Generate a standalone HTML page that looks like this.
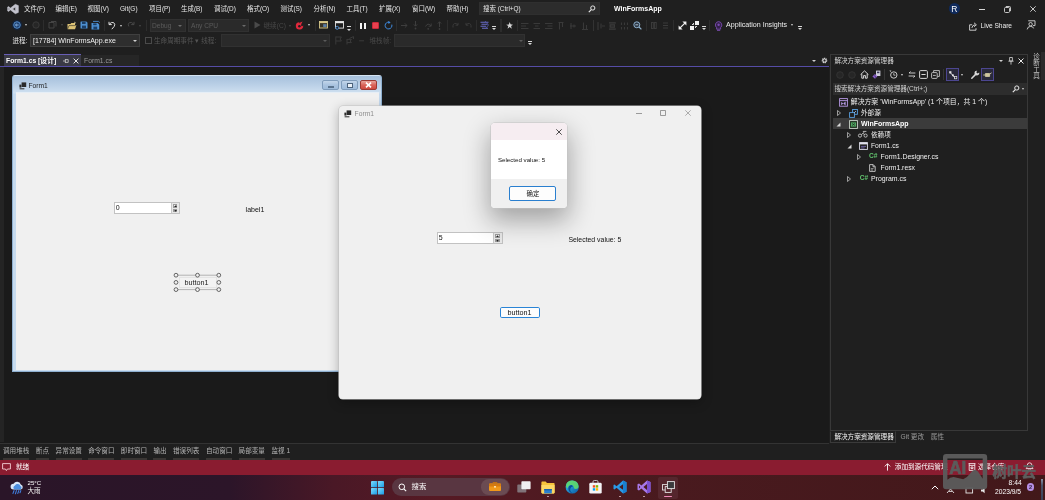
<!DOCTYPE html>
<html lang="zh-CN">
<head>
<meta charset="utf-8">
<title>WinFormsApp - Visual Studio</title>
<style>
*{box-sizing:border-box;margin:0;padding:0}
html,body{width:1045px;height:500px;overflow:hidden;background:#1f1f1f}
body{position:relative;font-family:"Liberation Sans","Noto Sans CJK SC",sans-serif;font-size:6.6px;color:#e6e6e6;line-height:1}
.a{position:absolute;white-space:nowrap}
.t{position:absolute;white-space:nowrap;line-height:10px;height:10px}
.dim{color:#6a6a6a}
.combo{position:absolute;background:#2a2a2a;border:1px solid #313131}
.arrow{position:absolute;width:0;height:0;border-left:2px solid transparent;border-right:2px solid transparent;border-top:2.5px solid #d0d0d0}
.arrow.d{border-top-color:#666}
.sep{position:absolute;width:1px;background:#2d2d2d}
svg{position:absolute;overflow:visible}
</style>
</head>
<body>
<div id="root" style="position:absolute;left:0;top:0;width:1045px;height:500px;will-change:transform">
<!-- ===== MENU BAR ===== -->
<div id="menubar" style="font-size:6.45px">
<svg style="left:7px;top:4px" width="12" height="10" viewBox="0 0 12 10"><path d="M8.3 0.3 L11.4 1.6 V8.4 L8.3 9.7 L3.4 5.9 L1.6 7.4 L0.6 6.9 V3.1 L1.6 2.6 L3.4 4.1 Z M8.3 3.2 L5.6 5 L8.3 6.8 Z M1.6 4.1 V5.9 L2.6 5 Z" fill="#c2c2cc" stroke="#c2c2cc" stroke-width="0.5" stroke-linejoin="round" fill-rule="evenodd"/></svg>
<div class="t" style="left:24px;top:4px">文件(F)</div>
<div class="t" style="left:55.5px;top:4px">编辑(E)</div>
<div class="t" style="left:87.5px;top:4px">视图(V)</div>
<div class="t" style="left:120px;top:4px">Git(G)</div>
<div class="t" style="left:149px;top:4px">项目(P)</div>
<div class="t" style="left:181px;top:4px">生成(B)</div>
<div class="t" style="left:214px;top:4px">调试(D)</div>
<div class="t" style="left:247px;top:4px">格式(O)</div>
<div class="t" style="left:280.5px;top:4px">测试(S)</div>
<div class="t" style="left:313.5px;top:4px">分析(N)</div>
<div class="t" style="left:346.5px;top:4px">工具(T)</div>
<div class="t" style="left:379px;top:4px">扩展(X)</div>
<div class="t" style="left:412px;top:4px">窗口(W)</div>
<div class="t" style="left:446.5px;top:4px">帮助(H)</div>
<div class="a" style="left:479px;top:2px;width:121px;height:13px;background:#2c2c2c;border:1px solid #2f2f2f"></div>
<div class="t" style="left:483px;top:4px">搜索 (Ctrl+Q)</div>
<svg style="left:588px;top:5px" width="8" height="8" viewBox="0 0 8 8"><circle cx="4.8" cy="3" r="2.1" fill="none" stroke="#e6e6e6" stroke-width="1"/><path d="M3.3 4.6 L0.8 7.2" stroke="#e6e6e6" stroke-width="1.2"/></svg>
<div class="t" style="left:614px;top:4px;font-weight:bold;color:#fff;font-size:7px">WinFormsApp</div>
<div class="a" style="left:949px;top:3px;width:11px;height:11px;border-radius:50%;background:#0f2a5c"></div>
<div class="t" style="left:951.3px;top:3.6px;font-size:8.5px;color:#fff">R</div>
<div class="a" style="left:979px;top:8.5px;width:6px;height:1px;background:#d8d8d8"></div>
<svg style="left:1004px;top:5.5px" width="7" height="7" viewBox="0 0 7 7"><rect x="0.5" y="1.5" width="5" height="5" rx="1" fill="none" stroke="#d8d8d8" stroke-width="0.9"/><path d="M1.8 0.5 H5.5 Q6.5 0.5 6.5 1.5 V5.2" fill="none" stroke="#d8d8d8" stroke-width="0.9"/></svg>
<svg style="left:1030px;top:6px" width="6" height="6" viewBox="0 0 6 6"><path d="M0.3 0.3 L5.7 5.7 M5.7 0.3 L0.3 5.7" stroke="#d8d8d8" stroke-width="0.9"/></svg>
</div>

<!-- ===== TOOLBAR ROW 1 ===== -->
<div id="toolbar1">
<svg style="left:13px;top:20.7px" width="8" height="8" viewBox="0 0 8 8"><circle cx="4" cy="4" r="5.2" fill="#14233a"/><circle cx="4" cy="4" r="3.3" fill="#1f4272" stroke="#5a94d4" stroke-width="0.9"/><path d="M5.6 4 H2.6 M3.8 2.8 L2.5 4 L3.8 5.2" fill="none" stroke="#9cc8f4" stroke-width="0.8"/></svg>
<div class="arrow" style="left:25px;top:24px;border-left-width:1.5px;border-right-width:1.5px;border-top-width:2px"></div>
<svg style="left:32px;top:21px" width="8" height="8" viewBox="0 0 8 8"><circle cx="4" cy="4" r="3.2" fill="#262626" stroke="#3c3c3c" stroke-width="0.9"/></svg>
<div class="sep" style="left:43px;top:20px;height:11px"></div>
<svg style="left:48px;top:21px" width="9" height="8" viewBox="0 0 9 8"><path d="M1 1.5 H6 V7 H1 Z M3 0.5 H8 V5.5" fill="none" stroke="#444" stroke-width="1"/></svg>
<div class="arrow d" style="left:60.5px;top:24px;border-left-width:1.5px;border-right-width:1.5px;border-top-width:2px;border-top-color:#4a4a4a"></div>
<svg style="left:67px;top:20.5px" width="10" height="9" viewBox="0 0 10 9"><path d="M0.5 3 H3.5 L4.3 2 H8 V4 H9.5 L8 8.3 H0.5 Z" fill="#dcc274"/><path d="M0.5 8.3 L2 4.6 H9.5" fill="none" stroke="#2a2a2a" stroke-width="0.6"/><path d="M7.5 0.3 L8 1.2 L9 1.4 L8.2 2 L8.4 3 L7.5 2.5" fill="#f0e0a0"/></svg>
<svg style="left:79.5px;top:21px" width="8" height="8" viewBox="0 0 8 8"><path d="M0.5 1 Q0.5 0.5 1 0.5 H6.3 L7.5 1.7 V7 Q7.5 7.5 7 7.5 H1 Q0.5 7.5 0.5 7 Z" fill="#4d8fd0"/><rect x="2" y="0.8" width="3.6" height="2.2" fill="#1c3f66"/><rect x="2" y="4.6" width="4" height="2.9" fill="#1c3f66"/></svg>
<svg style="left:91px;top:20.5px" width="9" height="9" viewBox="0 0 9 9"><path d="M0.5 2 H6.6 L8.2 3.4 V8.5 H0.5 Z" fill="#4d8fd0"/><path d="M2 0.4 H7.5 L8.8 1.6" fill="none" stroke="#4d8fd0" stroke-width="0.9"/><rect x="2.2" y="2.4" width="3.4" height="1.8" fill="#1c3f66"/><rect x="2.4" y="5.6" width="3.8" height="2.9" fill="#1c3f66"/></svg>
<div class="sep" style="left:103.5px;top:20px;height:11px"></div>
<svg style="left:107.5px;top:21px" width="8" height="9" viewBox="0 0 8 9"><path d="M1 0.8 V3.6 H3.8" fill="none" stroke="#e0e0e0" stroke-width="1"/><path d="M1.2 3.4 Q3.2 0.6 5.6 1.6 Q7.6 3 6.2 5.4 L3.8 8.2" fill="none" stroke="#e0e0e0" stroke-width="1"/></svg>
<div class="arrow" style="left:119.5px;top:24.5px;border-left-width:1.5px;border-right-width:1.5px;border-top-width:2px"></div>
<svg style="left:127px;top:21px" width="8" height="9" viewBox="0 0 8 9"><path d="M7 0.8 V3.6 H4.2" fill="none" stroke="#484848" stroke-width="1"/><path d="M6.8 3.4 Q4.8 0.6 2.4 1.6 Q0.4 3 1.8 5.4" fill="none" stroke="#484848" stroke-width="1"/></svg>
<div class="arrow d" style="left:138.5px;top:24.5px;border-left-width:1.5px;border-right-width:1.5px;border-top-width:2px;border-top-color:#4a4a4a"></div>
<div class="sep" style="left:145.5px;top:20px;height:11px"></div>
<div class="combo" style="left:149.5px;top:19px;width:36px;height:13px"></div>
<div class="t dim" style="left:152px;top:20.5px;color:#5a5a5a">Debug</div>
<div class="arrow d" style="left:178px;top:24.5px;border-top-color:#6a6a6a"></div>
<div class="combo" style="left:188px;top:19px;width:60.5px;height:13px"></div>
<div class="t dim" style="left:191px;top:20.5px;color:#5a5a5a">Any CPU</div>
<div class="arrow d" style="left:241.5px;top:24.5px;border-top-color:#6a6a6a"></div>
</div>
<!-- ===== TOOLBAR ROW 2 (debug location) ===== -->
<div id="toolbar2">
<div class="t" style="left:12.5px;top:35.9px">进程:</div>
<div class="combo" style="left:29.5px;top:33.5px;width:110px;height:13px;background:#2e2e2e;border-color:#3f3f3f"></div>
<div class="t" style="left:33px;top:35.7px;color:#f0f0f0;font-size:7px">[17784] WinFormsApp.exe</div>
<div class="arrow" style="left:132.5px;top:39.5px"></div>
<div class="a" style="left:144.5px;top:36.5px;width:7px;height:7px;border:1px solid #4a4a4a"></div>
<div class="t dim" style="left:154px;top:35.5px;color:#555">生命周期事件 ▾ 线程:</div>
<div class="combo" style="left:220.5px;top:33.5px;width:109px;height:13px"></div>
<div class="arrow d" style="left:323px;top:39.5px;border-top-color:#5a5a5a"></div>
</div>

<!-- ===== TOOLBAR ROW 1 continued ===== -->
<div id="toolbar1b">
<svg style="left:253.5px;top:21px" width="7" height="8" viewBox="0 0 7 8"><path d="M0.5 0.5 L6.5 4 L0.5 7.5 Z" fill="#4a4a4a"/></svg>
<div class="t" style="left:263.5px;top:20.5px;color:#484848">继续(C)</div>
<div class="arrow d" style="left:288.5px;top:24.5px;border-left-width:1.5px;border-right-width:1.5px;border-top-width:2px;border-top-color:#4a4a4a"></div>
<svg style="left:295px;top:20.5px" width="9" height="9" viewBox="0 0 9 9"><path d="M4.4 1.2 A3.7 3.7 0 1 0 8.2 4.6 Q7.4 5.4 6.2 5 Q5.6 3.2 7.6 0.4 Q5.2 0.8 4.4 2.6 Z" fill="#e0283c"/><circle cx="4.4" cy="5.2" r="1.3" fill="#1f1f1f"/></svg>
<div class="arrow" style="left:307.5px;top:24.3px;border-left-width:1.7px;border-right-width:1.7px;border-top-width:2px"></div>
<div class="sep" style="left:314.5px;top:20px;height:11px"></div>
<svg style="left:318.5px;top:21px" width="9" height="8" viewBox="0 0 9 8"><rect x="0.5" y="0.5" width="8" height="6.5" fill="#3a3526" stroke="#d9c98a" stroke-width="0.9"/><rect x="0.5" y="0.5" width="8" height="1.6" fill="#d9c98a"/><rect x="4.2" y="3.2" width="3.4" height="2.8" fill="#5b7fa8"/></svg>
<svg style="left:335px;top:20.5px" width="9" height="9" viewBox="0 0 9 9"><rect x="0.5" y="0.5" width="8" height="6.6" fill="#1f1f1f" stroke="#e4e4e4" stroke-width="0.9"/><rect x="0.5" y="0.5" width="8" height="1.7" fill="#e4e4e4"/><circle cx="2.2" cy="6.8" r="1.5" fill="#1f1f1f" stroke="#4d8fd6" stroke-width="0.9"/></svg>
<div class="a" style="left:347px;top:26.400000000000002px;width:4px;height:1px;background:#d8d8d8"></div><div class="arrow" style="left:347px;top:28.6px;border-top-color:#d8d8d8;border-left-width:2px;border-right-width:2px;border-top-width:2px"></div>
<div class="sep" style="left:355px;top:20px;height:11px"></div>
<div class="a" style="left:360.3px;top:22.6px;width:2px;height:6px;background:#f4f4f4"></div>
<div class="a" style="left:364.2px;top:22.6px;width:2px;height:6px;background:#f4f4f4"></div>
<div class="a" style="left:372px;top:22px;width:7px;height:7px;border-radius:1px;background:#e8414f;border:1px solid #c8283a"></div>
<svg style="left:383.5px;top:20.5px" width="9" height="9" viewBox="0 0 9 9"><path d="M5.2 1.2 A3.4 3.4 0 1 0 7.8 3.6" fill="none" stroke="#3f8be0" stroke-width="1"/><path d="M4.2 0 L6.6 1.2 L4.6 2.9 Z" fill="#3f8be0"/></svg>
<div class="sep" style="left:395.5px;top:20px;height:11px"></div>
<svg style="left:401px;top:22px" width="7" height="7" viewBox="0 0 7 7"><path d="M0 3.5 H6 M3.8 1.3 L6 3.5 L3.8 5.7" fill="none" stroke="#3e3e3e" stroke-width="1"/></svg>
<svg style="left:413px;top:21px" width="5" height="9" viewBox="0 0 5 9"><path d="M2.5 0 V5 M0.8 3.4 L2.5 5.2 L4.2 3.4" fill="none" stroke="#3e3e3e" stroke-width="1"/><circle cx="2.5" cy="7.5" r="0.9" fill="#3e3e3e"/></svg>
<svg style="left:424.5px;top:21.5px" width="7" height="8" viewBox="0 0 7 8"><path d="M0.5 4.5 Q3 0 6 4 M6.2 1.5 V4.2 H3.6" fill="none" stroke="#3e3e3e" stroke-width="1"/><circle cx="3.2" cy="6.8" r="0.9" fill="#3e3e3e"/></svg>
<svg style="left:437px;top:20.5px" width="5" height="9" viewBox="0 0 5 9"><path d="M2.5 6 V0.8 M0.8 2.6 L2.5 0.8 L4.2 2.6" fill="none" stroke="#3e3e3e" stroke-width="1"/><circle cx="2.5" cy="8" r="0.9" fill="#3e3e3e"/></svg>
<div class="sep" style="left:447px;top:20px;height:11px"></div>
<svg style="left:452px;top:22px" width="7" height="7" viewBox="0 0 7 7"><path d="M1 5.5 Q0.5 1 4 1.5 L6 3 M6 0.8 V3.2 H3.6" fill="none" stroke="#3a3a3a" stroke-width="1"/></svg>
<svg style="left:464.5px;top:22px" width="7" height="7" viewBox="0 0 7 7"><path d="M6 5.5 Q6.5 1 3 1.5 L1 3 M1 0.8 V3.2 H3.4" fill="none" stroke="#3a3a3a" stroke-width="1"/></svg>
<div class="sep" style="left:475.5px;top:20px;height:11px"></div>
<svg style="left:480px;top:21px" width="9" height="8" viewBox="0 0 9 8"><path d="M0.5 1.2 H8.5 M1.5 3.2 H7.5 M0.5 5.2 H6 M2 7.2 H8" stroke="#6a6cc8" stroke-width="1.1"/><path d="M5 0 L8.5 4 L5.5 7.5" fill="none" stroke="#5558b0" stroke-width="0.8"/></svg>
<div class="a" style="left:491.7px;top:25.8px;width:4px;height:1px;background:#d8d8d8"></div><div class="arrow" style="left:491.7px;top:28px;border-top-color:#d8d8d8;border-left-width:2px;border-right-width:2px;border-top-width:2px"></div>
<div class="sep" style="left:500px;top:19px;height:13px;width:2px;background:#2c2c2c"></div>
<svg style="left:505.5px;top:21.5px" width="7" height="7" viewBox="0 0 8 8"><path d="M4.2 0 L5.2 2.6 L8 3 L5.8 4.6 L6.6 7.6 L4.2 5.8 L1.8 7.6 L2.6 4.6 L0.2 3.2 L3.2 2.8 Z" fill="#d4d4d4"/></svg>
<div class="sep" style="left:516.5px;top:20px;height:11px"></div>
<svg style="left:521px;top:21.5px" width="95" height="8" viewBox="0 0 95 8">
<g fill="none" stroke="#393939" stroke-width="1.1">
<path d="M0 1.5 H7.5 M0 4 H5 M0 6.5 H7.5"/>
<path d="M12.5 1.5 H19 M14 4 H17.5 M12.5 6.5 H19"/>
<path d="M24 1.5 H31.5 M26.5 4 H31.5 M24 6.5 H31.5"/>
<path d="M37.5 0.5 H42.5 M38.5 1 V7.5 M41.5 1 V5"/>
<path d="M50 1 V7 M53 2.5 V5.5 M49 4 H55"/>
<path d="M61 7.5 H67 M62.5 7 V0.5 M65.5 7 V3"/>
<path d="M77 0 V8 M80 1.5 V6.5 M81 4 H84"/>
<path d="M88 1 H95 M88 7 H95 M89.5 3 H93.5 V5 H89.5 Z"/>
</g></svg>
<div class="sep" style="left:593px;top:20px;height:11px;background:#333"></div>
<svg style="left:609px;top:21.5px" width="20" height="8" viewBox="0 0 20 8"><g fill="none" stroke="#393939" stroke-width="1.1"><path d="M0 0.8 H6.5 M0 7.2 H6.5 M1 2.8 H5.5 V5.2 H1 Z"/><path d="M12.5 0.5 V3 M12.5 5 V7.5 M15.5 0.5 V3 M15.5 5 V7.5 M18.5 0.5 V3 M18.5 5 V7.5"/></g></svg>
<svg style="left:633px;top:20.5px" width="9" height="9" viewBox="0 0 9 9"><circle cx="3.8" cy="3.8" r="3" fill="#2a3644" stroke="#8fb0cc" stroke-width="1"/><path d="M6 6 L8.4 8.4" stroke="#8fb0cc" stroke-width="1.2"/><path d="M2.4 3.8 H5.2" stroke="#cfe0ee" stroke-width="0.8"/></svg>
<div class="sep" style="left:645.5px;top:20px;height:11px"></div>
<svg style="left:651px;top:22px" width="18" height="7" viewBox="0 0 18 7"><g fill="none" stroke="#3b3b3b" stroke-width="1"><rect x="0.5" y="0.5" width="1.8" height="6"/><rect x="3.4" y="0.5" width="1.8" height="6"/><path d="M12 1 H17 M12 3.5 H17 M12 6 H17"/></g></svg>
<div class="sep" style="left:673px;top:20px;height:11px"></div>
<svg style="left:677.5px;top:20.5px" width="9" height="9" viewBox="0 0 9 9"><path d="M1.6 7.4 L7.4 1.6" stroke="#f0f0f0" stroke-width="1.3"/><path d="M4.4 0.6 H8.4 V4.6 Z M0.6 4.4 V8.4 H4.6 Z" fill="#f0f0f0"/></svg>
<svg style="left:690px;top:20.5px" width="9" height="9" viewBox="0 0 9 9"><rect x="0" y="5" width="4" height="4" fill="#f0f0f0"/><rect x="5" y="0" width="4" height="4" fill="#f0f0f0"/><path d="M2 3.5 H3.5 V2 M5.5 7 V5.5 H7" fill="none" stroke="#f0f0f0" stroke-width="0.9"/></svg>
<div class="a" style="left:702px;top:25.8px;width:4px;height:1px;background:#d8d8d8"></div><div class="arrow" style="left:702px;top:28px;border-top-color:#d8d8d8;border-left-width:2px;border-right-width:2px;border-top-width:2px"></div>
<div class="sep" style="left:709px;top:20px;height:11px"></div>
<svg style="left:714px;top:20.5px" width="9" height="10" viewBox="0 0 9 10"><path d="M4.5 0.6 A3.4 3.4 0 0 1 6.6 6.6 V8.2 H2.6 V6.6 A3.4 3.4 0 0 1 4.5 0.6 Z" fill="#33204a" stroke="#7a4cb0" stroke-width="0.9"/><path d="M3 9.4 H6.2" stroke="#7a4cb0" stroke-width="0.9"/><circle cx="4.6" cy="3.8" r="1.2" fill="#7a4cb0"/></svg>
<div class="t" style="left:726px;top:20.3px;font-size:7.1px;color:#ededed">Application Insights</div>
<div class="arrow" style="left:791px;top:24px;border-left-width:1.7px;border-right-width:1.7px;border-top-width:2px"></div>
<div class="a" style="left:798.2px;top:25.8px;width:4px;height:1px;background:#d8d8d8"></div><div class="arrow" style="left:798.2px;top:28px;border-top-color:#d8d8d8;border-left-width:2px;border-right-width:2px;border-top-width:2px"></div>
<svg style="left:969px;top:21.5px" width="9" height="9" viewBox="0 0 9 9"><path d="M3.2 2.8 H0.6 V8.2 H7 V6.2" fill="none" stroke="#d8d8d8" stroke-width="0.9"/><path d="M2.8 6 Q3.4 2.8 6.2 2.8 M5 0.8 L7.4 2.8 L5 4.8" fill="none" stroke="#d8d8d8" stroke-width="0.9"/></svg>
<div class="t" style="left:980.5px;top:20.8px;font-size:6.6px;color:#ededed">Live Share</div>
<svg style="left:1025.5px;top:20px" width="10" height="10" viewBox="0 0 10 10"><path d="M2.2 0.8 H9 V5.6 H7" fill="none" stroke="#d8d8d8" stroke-width="0.9"/><circle cx="4.6" cy="4.2" r="1.7" fill="none" stroke="#d8d8d8" stroke-width="0.9"/><path d="M1.2 9.4 Q1.6 6.4 4.6 6.4 Q7.2 6.4 7.6 8.4" fill="none" stroke="#d8d8d8" stroke-width="0.9"/></svg>
</div>
<!-- ===== TOOLBAR ROW 2 continued ===== -->
<div id="toolbar2b">
<svg style="left:334.5px;top:36px" width="30" height="9" viewBox="0 0 30 9"><g fill="none" stroke="#3a3a3a" stroke-width="1"><path d="M0.8 0.5 V8.5 M0.8 1 H6.4 L5 3 L6.4 5 H0.8"/><path d="M12 3 V8.5 M12 3.4 H16.4 L15.2 5 L16.4 6.6 H12 M14.5 2.4 L18.5 0.6 V3"/><path d="M24.2 4.8 H29"/></g></svg>
<div class="t" style="left:369.5px;top:35.5px;color:#4a4a4a">堆栈帧:</div>
<div class="combo" style="left:393.5px;top:33.5px;width:131.5px;height:13px"></div>
<div class="arrow d" style="left:519px;top:39.5px;border-top-color:#5a5a5a"></div>
<div class="a" style="left:527.8px;top:40.599999999999994px;width:4px;height:1px;background:#d8d8d8"></div><div class="arrow" style="left:527.8px;top:42.8px;border-top-color:#d8d8d8;border-left-width:2px;border-right-width:2px;border-top-width:2px"></div>
</div>

<!-- ===== DOCUMENT TABS ===== -->
<div id="tabs">
<div class="a" style="left:4px;top:54.3px;width:77px;height:12px;background:#3a3a46;border-top:1.4px solid #685eb6"></div>
<div class="t" style="left:6px;top:55.8px;font-weight:bold;color:#fff;font-size:6.8px">Form1.cs [设计]</div>
<svg style="left:62.5px;top:58px" width="6" height="6" viewBox="0 0 6 6"><path d="M0 3 H2.4 M2.4 1 V5 M2.4 1.6 H5.2 V4.4 H2.4" fill="none" stroke="#d0d0d0" stroke-width="0.8"/></svg>
<svg style="left:72.7px;top:58px" width="6" height="6" viewBox="0 0 6 6"><path d="M0.6 0.6 L5.4 5.4 M5.4 0.6 L0.6 5.4" stroke="#e8e8e8" stroke-width="1"/></svg>
<div class="a" style="left:81px;top:55px;width:58px;height:11px;background:#262626"></div>
<div class="t" style="left:84px;top:55.6px;color:#9a9a9a;font-size:6.8px">Form1.cs</div>
<div class="a" style="left:0;top:65.5px;width:829px;height:1.6px;background:#554ca6"></div>
<div class="arrow" style="left:811.5px;top:60px"></div>
<svg style="left:820.5px;top:57px" width="7" height="7" viewBox="0 0 7 7"><circle cx="3.5" cy="3.5" r="2" fill="none" stroke="#d0d0d0" stroke-width="1.6" stroke-dasharray="1.1 0.5"/><circle cx="3.5" cy="3.5" r="1.6" fill="none" stroke="#d0d0d0" stroke-width="0.9"/></svg>
</div>
<!-- ===== DESIGN SURFACE ===== -->
<div id="surface" class="a" style="left:0;top:67px;width:829px;height:376.5px;background:#1a1a1a;border-bottom:1px solid #333"></div>
<div class="a" style="left:0;top:67px;width:4px;height:375px;background:#242424"></div>
<!-- designer form (Aero frame) -->
<div id="designform" class="a" style="left:12.4px;top:75.3px;width:369.4px;height:297px;border-radius:3px 3px 0 0;background:linear-gradient(#a6c0dc 0,#bdd2e8 10px,#cfe0f0 17px,#c4d9ee 18px,#c8dcef 100%);border:1px solid #8fb0d0;border-top-color:#d5e4f2">
  <div class="a" style="left:2.2px;top:16.2px;width:363px;height:278px;background:#f0f0f0;border-top:1px solid #e6eef6"></div>
</div>
<svg style="left:18.5px;top:81.5px" width="8" height="8" viewBox="0 0 8 8"><rect x="2.6" y="0.4" width="4.6" height="4.6" fill="#2b2b2b"/><rect x="0.4" y="2.6" width="2" height="3" fill="#2b2b2b"/><path d="M0.6 6.8 H5.4" stroke="#2b2b2b" stroke-width="1"/></svg>
<div class="t" style="left:28.5px;top:80.6px;color:#1c1c1c;font-size:6.7px">Form1</div>
<div class="a" style="left:322.4px;top:80.3px;width:17px;height:10px;border:1px solid #7f9cbb;border-radius:2px;background:linear-gradient(#c3d6ea,#a9c3df 50%,#9fbcdb)"></div>
<div class="a" style="left:328px;top:86px;width:6px;height:2px;background:#f4f8fc;border:0.5px solid #5c7590"></div>
<div class="a" style="left:341px;top:80.3px;width:17px;height:10px;border:1px solid #7f9cbb;border-radius:2px;background:linear-gradient(#c3d6ea,#a9c3df 50%,#9fbcdb)"></div>
<div class="a" style="left:346.5px;top:83px;width:6.5px;height:5px;border:1px solid #4c637c;border-top-width:1.4px;background:#eaf1f8"></div>
<div class="a" style="left:359.7px;top:80.3px;width:17px;height:10px;border:1px solid #9c3a34;border-radius:2px;background:linear-gradient(#e8a59c,#d9645a 50%,#cf4a40)"></div>
<svg style="left:365px;top:82.3px" width="7" height="6" viewBox="0 0 7 6"><path d="M1 0.6 L6 5.4 M6 0.6 L1 5.4" stroke="#fff" stroke-width="1.6"/></svg>
<!-- designer controls -->
<div class="a" style="left:114.3px;top:202.1px;width:65.4px;height:12.2px;background:#fff;border:1px solid #c2c2c2"></div>
<div class="a" style="left:170.6px;top:203.1px;width:8.2px;height:10.2px;background:#e8e8e8;border-left:1px solid #c8c8c8"></div>
<div class="a" style="left:172.6px;top:204.2px;width:4.6px;height:3.6px;border:0.5px solid #9a9a9a;background:#f4f4f4"></div>
<div class="a" style="left:172.6px;top:208.6px;width:4.6px;height:3.6px;border:0.5px solid #9a9a9a;background:#f4f4f4"></div>
<svg style="left:173.6px;top:205px" width="3" height="7" viewBox="0 0 3 7"><path d="M0 2 L1.5 0.2 L3 2 Z M0 5 L1.5 6.8 L3 5 Z" fill="#222"/></svg>
<div class="t" style="left:115.8px;top:202.8px;color:#111;font-size:7px">0</div>
<div class="t" style="left:245.6px;top:205.3px;color:#111;font-size:7px">label1</div>
<div class="a" style="left:178.5px;top:277px;width:38px;height:11px;background:#f3f3f3;border:1px solid #e4e4e4"></div>
<div class="t" style="left:184.6px;top:278px;color:#1a1a1a;font-size:7.2px">button1</div>
<svg style="left:173px;top:272px" width="49" height="21" viewBox="173 272 49 21"><path d="M176 275.2 H218.8 M176 289.6 H218.8" stroke="#9a9a9a" stroke-width="0.7"/><g fill="#f0f0f0" stroke="#444" stroke-width="0.8"><circle cx="176" cy="275.2" r="1.9"/><circle cx="197.5" cy="275.2" r="1.9"/><circle cx="218.8" cy="275.2" r="1.9"/><circle cx="176" cy="282.4" r="1.9"/><circle cx="218.8" cy="282.4" r="1.9"/><circle cx="176" cy="289.6" r="1.9"/><circle cx="197.5" cy="289.6" r="1.9"/><circle cx="218.8" cy="289.6" r="1.9"/></g></svg>
<!-- ===== RUNNING FORM WINDOW ===== -->
<div id="runform" class="a" style="left:338.8px;top:105.5px;width:362.4px;height:293.5px;background:#f0f0f0;border-radius:4px;box-shadow:0 0 0 0.6px #c4c4c4,0 3px 12px rgba(0,0,0,.3)"></div>
<svg style="left:344.2px;top:109.5px" width="8" height="8" viewBox="0 0 8 8"><rect x="2.6" y="0.4" width="4.6" height="4.6" fill="#2b2b2b"/><rect x="0.4" y="2.6" width="2" height="3" fill="#2b2b2b"/><path d="M0.6 6.8 H5.4" stroke="#2b2b2b" stroke-width="1"/></svg>
<div class="t" style="left:354.6px;top:108.6px;color:#8c8c8c;font-size:6.7px">Form1</div>
<div class="a" style="left:635.5px;top:113.2px;width:6px;height:0.8px;background:#9a9a9a"></div>
<div class="a" style="left:659.8px;top:110.4px;width:6px;height:6px;border:0.8px solid #9a9a9a;border-radius:0.8px"></div>
<svg style="left:684.6px;top:110.4px" width="6" height="6" viewBox="0 0 6 6"><path d="M0.3 0.3 L5.7 5.7 M5.7 0.3 L0.3 5.7" stroke="#9a9a9a" stroke-width="0.8"/></svg>
<div class="a" style="left:437.2px;top:232px;width:65.4px;height:12.2px;background:#fff;border:1px solid #c2c2c2"></div>
<div class="a" style="left:493.4px;top:233px;width:8.2px;height:10.2px;background:#e8e8e8;border-left:1px solid #c8c8c8"></div>
<div class="a" style="left:495.4px;top:234.1px;width:4.6px;height:3.6px;border:0.5px solid #9a9a9a;background:#f4f4f4"></div>
<div class="a" style="left:495.4px;top:238.5px;width:4.6px;height:3.6px;border:0.5px solid #9a9a9a;background:#f4f4f4"></div>
<svg style="left:496.4px;top:234.9px" width="3" height="7" viewBox="0 0 3 7"><path d="M0 2 L1.5 0.2 L3 2 Z M0 5 L1.5 6.8 L3 5 Z" fill="#222"/></svg>
<div class="t" style="left:438.7px;top:232.7px;color:#111;font-size:7px">5</div>
<div class="t" style="left:568.4px;top:235.3px;color:#111;font-size:6.9px">Selected value: 5</div>
<div class="a" style="left:500.3px;top:307.2px;width:39.6px;height:10.4px;background:#fdfdfd;border:1px solid #2a84d6;border-radius:1.8px"></div>
<div class="t" style="left:507.5px;top:307.5px;color:#111;font-size:7.2px">button1</div>
<!-- ===== MESSAGE BOX ===== -->
<div id="msgbox" class="a" style="left:491.4px;top:123.2px;width:75.5px;height:84.8px;background:#fff;border-radius:4px;overflow:hidden;box-shadow:0 0 0 0.6px #c4c4c4,0 11px 26px 2px rgba(0,0,0,.32)">
  <div class="a" style="left:0;top:0;width:100%;height:16.5px;background:#f6edf1"></div>
  <div class="a" style="left:0;top:55.5px;width:100%;height:30px;background:#f0f0f0"></div>
</div>
<svg style="left:555.7px;top:128.6px" width="6" height="6" viewBox="0 0 6 6"><path d="M0.3 0.3 L5.7 5.7 M5.7 0.3 L0.3 5.7" stroke="#222" stroke-width="0.8"/></svg>
<div class="t" style="left:497.9px;top:154.6px;color:#111;font-size:6.17px">Selected value: 5</div>
<div class="a" style="left:509.2px;top:186.4px;width:47.2px;height:14.3px;background:#fdfdfd;border:1px solid #2a7fcf;border-radius:2px"></div>
<div class="t" style="left:526.5px;top:188.7px;color:#111;font-size:6.4px">确定</div>

<!-- ===== SOLUTION EXPLORER ===== -->
<div id="solexp">
<div class="a" style="left:830.2px;top:54.2px;width:197.8px;height:377.3px;border:1px solid #383838;background:#1f1f1f"></div>
<div class="t" style="left:834.4px;top:55.5px;color:#d8d8d8">解决方案资源管理器</div>
<div class="arrow" style="left:998.8px;top:60px"></div>
<svg style="left:1007.5px;top:56.5px" width="6" height="8" viewBox="0 0 6 8"><path d="M1.6 0.5 H4.4 V4 H1.6 Z M0.4 4.2 H5.6 M3 4.2 V7.6" fill="none" stroke="#d8d8d8" stroke-width="0.8"/></svg>
<svg style="left:1017.5px;top:58px" width="6" height="6" viewBox="0 0 6 6"><path d="M0.5 0.5 L5.5 5.5 M5.5 0.5 L0.5 5.5" stroke="#e8e8e8" stroke-width="1"/></svg>
<!-- toolbar -->
<svg style="left:835.5px;top:70.5px" width="8" height="8" viewBox="0 0 8 8"><circle cx="4" cy="4" r="3.3" fill="#262626" stroke="#343434" stroke-width="0.9"/></svg>
<svg style="left:848px;top:70.5px" width="8" height="8" viewBox="0 0 8 8"><circle cx="4" cy="4" r="3.3" fill="#262626" stroke="#343434" stroke-width="0.9"/></svg>
<svg style="left:859.8px;top:70.3px" width="9" height="9" viewBox="0 0 9 9"><path d="M0.6 4.6 L4.5 0.9 L8.4 4.6 M1.8 4 V8.2 H3.6 V5.6 H5.4 V8.2 H7.2 V4" fill="none" stroke="#d8d8d8" stroke-width="1"/></svg>
<svg style="left:871.8px;top:70px" width="9" height="9" viewBox="0 0 9 9"><rect x="4" y="0.6" width="4.4" height="5.4" fill="#d0d0dc"/><rect x="5" y="1.6" width="2.4" height="1.6" fill="#3a3a5a"/><path d="M0.4 6.4 L3 4 L5.4 6.6 L3 8.8 Z" fill="#8a5fd0"/><path d="M2.6 5.2 L4.2 8.4" stroke="#1f1f1f" stroke-width="0.5"/></svg>
<div class="sep" style="left:883.7px;top:69px;height:11px;background:#353535"></div>
<svg style="left:888.6px;top:69.6px" width="9" height="9" viewBox="0 0 9 9"><circle cx="4.8" cy="5" r="3.2" fill="none" stroke="#d8d8d8" stroke-width="0.9"/><path d="M4.8 3.2 V5.2 H6.4" fill="none" stroke="#d8d8d8" stroke-width="0.8"/><path d="M0.4 0.4 H2.4 L1.4 2 Z" fill="#d8d8d8"/></svg>
<div class="arrow" style="left:900.6px;top:74px;border-left-width:1.7px;border-right-width:1.7px;border-top-width:2px"></div>
<svg style="left:907.8px;top:71px" width="8" height="7" viewBox="0 0 8 7"><path d="M7.4 2 H1 L2.6 0.5 M0.6 5 H7 L5.4 6.5" fill="none" stroke="#d8d8d8" stroke-width="0.9"/></svg>
<svg style="left:919px;top:70.3px" width="9" height="9" viewBox="0 0 9 9"><rect x="0.6" y="0.6" width="7.8" height="7.8" rx="1" fill="none" stroke="#d8d8d8" stroke-width="1"/><path d="M2.4 4.5 H6.6" stroke="#d8d8d8" stroke-width="1"/></svg>
<svg style="left:931px;top:70.3px" width="9" height="9" viewBox="0 0 9 9"><rect x="0.6" y="2.6" width="5.6" height="5.8" rx="0.8" fill="none" stroke="#c8c8c8" stroke-width="0.9"/><path d="M2.6 2.4 V0.6 H8.4 V6.4 H6.4 M2 5.4 H4.8" fill="none" stroke="#c8c8c8" stroke-width="0.9"/></svg>
<div class="sep" style="left:942.6px;top:69px;height:11px;background:#353535"></div>
<div class="a" style="left:946px;top:68.2px;width:13px;height:12.4px;border:1px solid #4c4690;background:#29293a"></div>
<svg style="left:948.6px;top:70.6px" width="8" height="8" viewBox="0 0 8 8"><rect x="0.2" y="0.2" width="2.2" height="2.2" fill="#e4e4e4"/><rect x="5.4" y="5.4" width="2.4" height="2.4" fill="none" stroke="#e4e4e4" stroke-width="0.7"/><path d="M1.6 2 L4 4.6 L5.4 6.4" fill="none" stroke="#e4e4e4" stroke-width="0.9"/><rect x="3" y="3.4" width="1.8" height="1.8" fill="#e4e4e4"/></svg>
<div class="arrow" style="left:960.6px;top:74px;border-left-width:1.5px;border-right-width:1.5px;border-top-width:2px"></div>
<svg style="left:970.8px;top:70px" width="9" height="9" viewBox="0 0 9 9"><path d="M0.8 8.2 L4.6 4.4" stroke="#d8d8d8" stroke-width="1.5" stroke-linecap="round"/><path d="M8.2 2.6 A2.4 2.4 0 1 1 6.2 0.7 L5.2 2.2 L6.6 3.6 Z" fill="#d8d8d8"/></svg>
<div class="a" style="left:981px;top:68.2px;width:13px;height:12.4px;border:1px solid #4c4690;background:#29293a"></div>
<svg style="left:983px;top:72px" width="9" height="5" viewBox="0 0 9 5"><path d="M0.2 3 H2 M2.4 1.6 H6.6 V4.4 H2.4 Z M6.8 2 L8.6 0.8" fill="#cfc7a0" stroke="#cfc7a0" stroke-width="0.9"/></svg>
<!-- search -->
<div class="a" style="left:832.5px;top:82.6px;width:194.5px;height:12px;background:#2d2d2d"></div>
<div class="t" style="left:834.4px;top:83.6px;color:#d0d0d0">搜索解决方案资源管理器(Ctrl+;)</div>
<svg style="left:1011.6px;top:84.6px" width="8" height="8" viewBox="0 0 8 8"><circle cx="4.8" cy="3" r="2.1" fill="none" stroke="#e6e6e6" stroke-width="1"/><path d="M3.3 4.6 L0.8 7.2" stroke="#e6e6e6" stroke-width="1.2"/></svg>
<div class="arrow" style="left:1021.6px;top:88.4px;border-left-width:1.5px;border-right-width:1.5px;border-top-width:2px"></div>
<!-- tree -->
<div class="a" style="left:832.5px;top:118.2px;width:194.5px;height:11px;background:#3b3b3b"></div>
<svg style="left:839.4px;top:98.0px" width="9" height="9" viewBox="0 0 9 9"><rect x="0.6" y="0.6" width="7.8" height="7.6" fill="none" stroke="#b89ae6" stroke-width="0.9"/><path d="M0.6 2.6 H8.4" stroke="#b89ae6" stroke-width="0.9"/><path d="M2.2 4 L4.2 5.6 L6.6 3.6 V7.4 L4.2 5.6 L2.2 7.2 Z" fill="#b89ae6"/></svg>
<div class="t" style="left:850.8px;top:97.1px;color:#f0f0f0;font-size:6.87px">解决方案 'WinFormsApp' (1 个项目，共 1 个)</div>
<svg style="left:836.8px;top:110.3px" width="4" height="6" viewBox="0 0 4 6"><path d="M0.5 0.5 L3.5 3 L0.5 5.5 Z" fill="none" stroke="#d0d0d0" stroke-width="0.7"/></svg>
<svg style="left:849px;top:108.7px" width="9" height="9" viewBox="0 0 9 9"><rect x="3.6" y="0.5" width="4.8" height="4.8" fill="none" stroke="#5aa0e0" stroke-width="0.9"/><rect x="0.6" y="3.6" width="4.8" height="4.8" fill="#1f1f1f" stroke="#5aa0e0" stroke-width="0.9"/><path d="M5 4 L7 2" stroke="#9ac4ee" stroke-width="0.8"/></svg>
<div class="t" style="left:861px;top:108.0px;color:#f0f0f0">外部源</div>
<svg style="left:836.4px;top:122.3px" width="5" height="5" viewBox="0 0 5 5"><path d="M4.5 0.5 V4.5 H0.5 Z" fill="#d8d8d8"/></svg>
<svg style="left:849px;top:119.7px" width="9" height="9" viewBox="0 0 9 9"><rect x="0.6" y="0.6" width="7.8" height="7.8" fill="#20301f" stroke="#cfd8cf" stroke-width="0.9"/><rect x="2" y="2.4" width="5" height="4.2" fill="#4fa860"/><path d="M3 3.4 L6 5.6 M6 3.4 L3 5.6" stroke="#1f1f1f" stroke-width="0.6"/></svg>
<div class="t" style="left:861px;top:119.0px;color:#fff;font-weight:bold;font-size:6.98px">WinFormsApp</div>
<svg style="left:847.2px;top:132.2px" width="4" height="6" viewBox="0 0 4 6"><path d="M0.5 0.5 L3.5 3 L0.5 5.5 Z" fill="none" stroke="#d0d0d0" stroke-width="0.7"/></svg>
<svg style="left:858.4px;top:131.4px" width="10" height="7" viewBox="0 0 10 7"><circle cx="2" cy="4.6" r="1.6" fill="none" stroke="#d8d8d8" stroke-width="0.8"/><circle cx="7.6" cy="4.6" r="1.6" fill="none" stroke="#d8d8d8" stroke-width="0.8"/><path d="M3.4 3.8 L5.8 1.4 L5.2 0.4 H8.4 M5 2.2 L6.4 3.8" fill="none" stroke="#d8d8d8" stroke-width="0.8"/></svg>
<div class="t" style="left:871px;top:129.9px;color:#f0f0f0">依赖项</div>
<svg style="left:846.8000000000001px;top:144.1px" width="5" height="5" viewBox="0 0 5 5"><path d="M4.5 0.5 V4.5 H0.5 Z" fill="#d8d8d8"/></svg>
<svg style="left:858.6px;top:141.7px" width="9" height="8" viewBox="0 0 9 8"><rect x="0.6" y="0.6" width="7.8" height="6.8" fill="none" stroke="#e0e0ec" stroke-width="0.9"/><rect x="0.6" y="0.6" width="7.8" height="1.8" fill="#e0e0ec"/><path d="M2 4.4 H7 M2 6 H5.6" stroke="#8a7ad0" stroke-width="0.7"/></svg>
<div class="t" style="left:871px;top:140.8px;color:#f0f0f0;font-size:6.7px">Form1.cs</div>
<svg style="left:857.4px;top:154.0px" width="4" height="6" viewBox="0 0 4 6"><path d="M0.5 0.5 L3.5 3 L0.5 5.5 Z" fill="none" stroke="#d0d0d0" stroke-width="0.7"/></svg>
<div class="t" style="left:869.0px;top:151.3px;font-size:6.6px;font-weight:bold;color:#62c46e;letter-spacing:-0.1px">C#</div>
<div class="t" style="left:880.6px;top:151.7px;color:#f0f0f0;font-size:6.9px">Form1.Designer.cs</div>
<svg style="left:869.4px;top:163.5px" width="7" height="8" viewBox="0 0 7 8"><path d="M0.6 0.6 H4.2 L6.2 2.6 V7.4 H0.6 Z M4 0.8 V2.8 H6" fill="none" stroke="#e0e0e0" stroke-width="0.8"/><path d="M1.8 4.6 H4.6 M1.8 6 H4" stroke="#e0e0e0" stroke-width="0.6"/></svg>
<div class="t" style="left:880.6px;top:162.6px;color:#f0f0f0;font-size:6.8px">Form1.resx</div>
<svg style="left:847.2px;top:176.0px" width="4" height="6" viewBox="0 0 4 6"><path d="M0.5 0.5 L3.5 3 L0.5 5.5 Z" fill="none" stroke="#d0d0d0" stroke-width="0.7"/></svg>
<div class="t" style="left:859.8px;top:173.3px;font-size:6.6px;font-weight:bold;color:#62c46e;letter-spacing:-0.1px">C#</div>
<div class="t" style="left:871px;top:173.7px;color:#f0f0f0;font-size:6.93px">Program.cs</div>
<!-- bottom tabs -->
<div class="a" style="left:830.2px;top:430.5px;width:66.3px;height:12.2px;border:1px solid #3a3a3a;border-top-color:#1f1f1f;background:#1f1f1f"></div>
<div class="t" style="left:834.4px;top:431.8px;color:#f4f4f4">解决方案资源管理器</div>
<div class="t" style="left:900.6px;top:431.8px;color:#9a9a9a">Git 更改</div>
<div class="t" style="left:930.8px;top:431.8px;color:#9a9a9a">属性</div>
</div>
<!-- right strip -->
<div class="a" style="left:1041px;top:52px;width:4px;height:28px;background:#2c2c2c"></div>
<div class="a" style="left:1032.6px;top:53px;width:7px;height:27px;writing-mode:vertical-rl;font-size:6.5px;line-height:7px;color:#c4c4c4;letter-spacing:0">诊断工具</div>

<!-- ===== BOTTOM TOOL TABS ===== -->
<div id="bottomtabs">
<div class="a" style="left:3px;top:458.3px;width:26.3px;height:1.6px;background:#3a3634"></div><div class="a" style="left:35.8px;top:458.3px;width:13.1px;height:1.6px;background:#3a3634"></div><div class="a" style="left:55.6px;top:458.3px;width:26.1px;height:1.6px;background:#3a3634"></div><div class="a" style="left:88.2px;top:458.3px;width:26.2px;height:1.6px;background:#3a3634"></div><div class="a" style="left:120.8px;top:458.3px;width:26.2px;height:1.6px;background:#3a3634"></div><div class="a" style="left:153.4px;top:458.3px;width:13.0px;height:1.6px;background:#3a3634"></div><div class="a" style="left:173px;top:458.3px;width:26.2px;height:1.6px;background:#3a3634"></div><div class="a" style="left:206px;top:458.3px;width:26.2px;height:1.6px;background:#3a3634"></div><div class="a" style="left:238.6px;top:458.3px;width:26.2px;height:1.6px;background:#3a3634"></div><div class="a" style="left:271.5px;top:458.3px;width:18.5px;height:1.6px;background:#3a3634"></div>
<div class="t" style="left:3px;top:446.3px;color:#b4b4b4">调用堆栈</div><div class="t" style="left:35.8px;top:446.3px;color:#b4b4b4">断点</div><div class="t" style="left:55.6px;top:446.3px;color:#b4b4b4">异常设置</div><div class="t" style="left:88.2px;top:446.3px;color:#b4b4b4">命令窗口</div><div class="t" style="left:120.8px;top:446.3px;color:#b4b4b4">即时窗口</div><div class="t" style="left:153.4px;top:446.3px;color:#b4b4b4">输出</div><div class="t" style="left:173px;top:446.3px;color:#b4b4b4">错误列表</div><div class="t" style="left:206px;top:446.3px;color:#b4b4b4">自动窗口</div><div class="t" style="left:238.6px;top:446.3px;color:#b4b4b4">局部变量</div><div class="t" style="left:271.5px;top:446.3px;color:#b4b4b4">监视 1</div>
</div>
<!-- ===== STATUS BAR ===== -->
<div id="statusbar" class="a" style="left:0;top:460px;width:1045px;height:14.5px;background:#8a1c30"></div>
<svg style="left:2px;top:462.5px" width="9" height="9" viewBox="0 0 9 9"><path d="M0.6 0.6 H8.4 V6 H5.4 L4.4 7.6 L3.4 6 H0.6 Z" fill="none" stroke="#f4d0d6" stroke-width="0.9"/></svg>
<div class="t" style="left:16px;top:461.8px;color:#fff">就绪</div>
<svg style="left:883.5px;top:463px" width="7" height="8" viewBox="0 0 7 8"><path d="M3.5 7.6 V0.8 M0.8 3.4 L3.5 0.7 L6.2 3.4" fill="none" stroke="#fff" stroke-width="0.9"/></svg>
<div class="t" style="left:894.8px;top:461.8px;color:#fff">添加到源代码管理</div>
<svg style="left:967.5px;top:462.8px" width="8" height="8" viewBox="0 0 8 8"><path d="M0.6 0.6 H7.4 M1.2 0.6 V7.4 H6.8 V0.6 M1.2 2.4 H6.8 M3 4 H5 V5.6 H3 Z" fill="none" stroke="#fff" stroke-width="0.8"/></svg>
<div class="t" style="left:978px;top:461.8px;color:#fff">选择仓库</div>
<svg style="left:1025px;top:462.4px" width="10" height="9" viewBox="0 0 10 9"><path d="M1.2 6.6 Q2.2 5.6 2.2 3.4 Q2.4 0.8 4.6 0.8 Q6.8 0.8 7 3.4 Q7 5.6 8 6.6 Z M3.6 7.6 Q4.6 8.8 5.6 7.6" fill="none" stroke="#f4e4e8" stroke-width="0.9"/></svg>
<!-- ===== TASKBAR ===== -->
<div id="taskbar" class="a" style="left:0;top:474.5px;width:1045px;height:25.5px;background:linear-gradient(90deg,#2a1528 0,#2c1529 22%,#4a1826 32%,#561a24 42%,#4a1a1f 60%,#42181a 100%)"></div>
<!-- weather -->
<svg style="left:10px;top:479.5px" width="14" height="15" viewBox="0 0 14 15"><path d="M3.4 9.6 A2.9 2.9 0 0 1 3.6 3.8 A3.9 3.9 0 0 1 10.8 4.4 A2.7 2.7 0 0 1 10.8 9.6 Z" fill="#d8e6f8"/><path d="M4.4 9.6 A2.4 2.4 0 0 1 5 5.4 A3 3 0 0 1 10.4 6 A2 2 0 0 1 10.4 9.6 Z" fill="#4d8fe0"/><path d="M4 10.6 L3 13.4 M6.4 10.6 L5.4 13.8 M8.8 10.6 L7.8 13.4 M10.8 10.6 L10 12.8" stroke="#3f7fe0" stroke-width="1.1" stroke-linecap="round"/></svg>
<div class="t" style="left:27.5px;top:478.4px;color:#fff;font-size:6.1px">25°C</div>
<div class="t" style="left:27.5px;top:486.3px;color:#f0f0f0">大雨</div>
<!-- start -->
<svg style="left:371.4px;top:480.6px" width="13" height="13.4" viewBox="0 0 13 13.4"><defs><linearGradient id="wg" x1="0" y1="0" x2="1" y2="1"><stop offset="0" stop-color="#7fdcfb"/><stop offset="1" stop-color="#1a9be6"/></linearGradient></defs><rect x="0" y="0" width="6.1" height="6.3" rx="0.5" fill="url(#wg)"/><rect x="6.9" y="0" width="6.1" height="6.3" rx="0.5" fill="url(#wg)"/><rect x="0" y="7.1" width="6.1" height="6.3" rx="0.5" fill="url(#wg)"/><rect x="6.9" y="7.1" width="6.1" height="6.3" rx="0.5" fill="url(#wg)"/></svg>
<!-- search pill -->
<div class="a" style="left:391.7px;top:477.8px;width:118.8px;height:18.4px;border-radius:9.2px;background:#593641"></div>
<div class="a" style="left:481px;top:479.4px;width:28px;height:15.2px;border-radius:7.6px;background:#6b4b52"></div>
<svg style="left:397.5px;top:483px" width="9" height="9" viewBox="0 0 9 9"><circle cx="3.8" cy="3.8" r="2.8" fill="none" stroke="#fff" stroke-width="1"/><path d="M5.8 5.8 L8.2 8.2" stroke="#fff" stroke-width="1.1"/></svg>
<div class="t" style="left:411.5px;top:482px;color:#fff;font-size:7.4px">搜索</div>
<svg style="left:489.3px;top:482.4px" width="12" height="9" viewBox="0 0 12 9"><rect x="0" y="1.6" width="12" height="7.4" rx="1" fill="#f0981a"/><path d="M4 1.6 V0.5 H8 V1.6" fill="none" stroke="#c8740c" stroke-width="0.9"/><rect x="0" y="1.6" width="12" height="3" rx="1" fill="#d47a10"/><rect x="5.2" y="4" width="1.6" height="1.6" fill="#fff2d0"/></svg>
<!-- task view -->
<svg style="left:517px;top:480.6px" width="14" height="12" viewBox="0 0 14 12"><rect x="0.3" y="3.6" width="9" height="8" rx="0.8" fill="#8a8488" opacity=".85"/><rect x="4.4" y="0.3" width="9.2" height="8" rx="0.8" fill="#f0eef0"/></svg>
<!-- explorer -->
<svg style="left:541px;top:480.6px" width="14" height="13" viewBox="0 0 14 13"><path d="M0.4 1.4 Q0.4 0.6 1.2 0.6 H4.6 L6 2 H12.8 Q13.6 2 13.6 2.8 V11.6 Q13.6 12.4 12.8 12.4 H1.2 Q0.4 12.4 0.4 11.6 Z" fill="#f6c33c"/><path d="M0.4 4 H13.6 V11.6 Q13.6 12.4 12.8 12.4 H1.2 Q0.4 12.4 0.4 11.6 Z" fill="#fbd766"/><rect x="3.2" y="8" width="7.6" height="4.4" fill="#2a7fd0"/><rect x="3.2" y="8" width="7.6" height="1.4" fill="#1a5fa8"/></svg>
<div class="a" style="left:546.8px;top:495.8px;width:2.6px;height:1.2px;border-radius:1px;background:#c8a8b0"></div>
<!-- edge -->
<svg style="left:564.8px;top:480.2px" width="14.4" height="14" viewBox="0 0 14.4 14"><defs><linearGradient id="eg" x1="0" y1="0" x2="1" y2="1"><stop offset="0" stop-color="#35c1f1"/><stop offset="1" stop-color="#0c59a4"/></linearGradient></defs><circle cx="7.2" cy="7" r="6.6" fill="url(#eg)"/><path d="M1 5.6 A6.4 6.4 0 0 1 13.6 6 Q13.8 9 10.6 9 Q8.6 9 8.8 7.2 Q8.6 5 6.2 5 Q3.4 5 2.8 8.2 Q0.8 7.6 1 5.6 Z" fill="#5fd86a" opacity=".9"/><path d="M6.2 5 Q3.2 5.4 3.4 9 Q3.8 12.4 7.6 13.2 Q4.6 11.4 5.4 8.4 Q6 6.6 8 6.6 Q7.4 5 6.2 5 Z" fill="#0b4f96"/></svg>
<!-- store -->
<svg style="left:589px;top:480px" width="13" height="14" viewBox="0 0 13 14"><path d="M4 3 V1.8 Q4 0.5 5.4 0.5 H7.6 Q9 0.5 9 1.8 V3" fill="none" stroke="#d0d4d8" stroke-width="0.9"/><rect x="0.3" y="2.8" width="12.4" height="10.8" rx="1.4" fill="#f4f4f6"/><rect x="3.8" y="5.2" width="2.4" height="2.4" fill="#f25022"/><rect x="6.8" y="5.2" width="2.4" height="2.4" fill="#7fba00"/><rect x="3.8" y="8.2" width="2.4" height="2.4" fill="#00a4ef"/><rect x="6.8" y="8.2" width="2.4" height="2.4" fill="#ffb900"/></svg>
<!-- vscode -->
<svg style="left:613px;top:480.2px" width="14" height="14" viewBox="0 0 14 14"><path d="M10 0.5 L13.5 2.2 V11.8 L10 13.5 L3.6 7.8 L1.4 9.6 L0.5 9 V5 L1.4 4.4 L3.6 6.2 Z" fill="#2a9ae8"/><path d="M10 0.5 L13.5 2.2 V11.8 L10 13.5 Z" fill="#1a7fd0"/><path d="M10 4.2 L6.2 7 L10 9.8 Z" fill="#471b1e"/></svg>
<div class="a" style="left:618.7px;top:495.8px;width:2.6px;height:1.2px;border-radius:1px;background:#c8a8b0"></div>
<!-- VS -->
<svg style="left:637px;top:480.2px" width="14" height="14" viewBox="0 0 14 14"><path d="M10 0.5 L13.5 2 V12 L10 13.5 L4.4 8.6 L2 10.6 L0.5 9.8 V4.2 L2 3.4 L4.4 5.4 Z" fill="#a878e8"/><path d="M10 0.5 L13.5 2 V12 L10 13.5 Z" fill="#7a4fd0"/><path d="M10 4 L6.4 7 L10 10 Z M2 5.6 V8.4 L3.4 7 Z" fill="#4a1b20"/></svg>
<div class="a" style="left:642.7px;top:495.8px;width:2.6px;height:1.2px;border-radius:1px;background:#c8a8b0"></div>
<!-- active app -->
<div class="a" style="left:658px;top:477px;width:20px;height:22px;border-radius:2px;background:#55262d"></div>
<svg style="left:661.6px;top:481px" width="13" height="12" viewBox="0 0 13 12"><rect x="0.5" y="3.6" width="5" height="5.4" fill="none" stroke="#e4e4e4" stroke-width="0.9"/><rect x="3.2" y="5.6" width="6" height="5.8" fill="#55262d" stroke="#e4e4e4" stroke-width="0.9"/><rect x="5.4" y="0.6" width="7" height="7" fill="#3a3a3c" stroke="#e4e4e4" stroke-width="0.9"/></svg>
<div class="a" style="left:663.8px;top:495.8px;width:8.4px;height:1.3px;border-radius:1px;background:#f08ab8"></div>
<!-- tray -->
<svg style="left:930.6px;top:485px" width="8" height="5" viewBox="0 0 8 5"><path d="M0.8 4.2 L4 1 L7.2 4.2" fill="none" stroke="#fff" stroke-width="1"/></svg>
<svg style="left:946px;top:486px" width="44" height="8" viewBox="0 0 44 8"><path d="M1 7 L4.5 3 L8 7 M3 5.4 L6 5.4" fill="none" stroke="#e8e8e8" stroke-width="0.9"/><rect x="20" y="2" width="6.6" height="5" fill="none" stroke="#e8e8e8" stroke-width="0.9"/><path d="M35 3.6 H36.6 L38.6 1.8 V7.2 L36.6 5.6 H35 Z" fill="#e8e8e8"/></svg>
<div class="t" style="left:1008.6px;top:477.6px;color:#fff;font-size:6.7px">8:44</div>
<div class="t" style="left:995px;top:486.6px;color:#fff;font-size:6.7px">2023/9/5</div>
<div class="a" style="left:1026.7px;top:483.2px;width:7.6px;height:7.6px;border-radius:50%;background:#b690e4"></div>
<div class="t" style="left:1028.9px;top:482px;color:#2a1a3a;font-size:5.6px;font-weight:bold">2</div>
<div class="a" style="left:1040.6px;top:479px;width:2.8px;height:21px;background:linear-gradient(#8a93a8,#4a5268 30%,#3a4258)"></div>
<!-- ===== WATERMARK ===== -->
<svg style="left:943.2px;top:453.8px" width="44.2" height="35.2" viewBox="0 0 44.2 35.2"><path fill-rule="evenodd" fill="#5b5b5b" fill-opacity=".97" d="M3.2 0 H41 Q44.2 0 44.2 3.2 V32 Q44.2 35.2 41 35.2 H3.2 Q0 35.2 0 32 V3.2 Q0 0 3.2 0 Z M4.4 4.4 V25.8 Q7.6 22.6 11.8 23.2 Q16 24.4 20.2 25.2 Q24 24 27.2 19.6 Q30 15.4 32.3 15.8 Q34.8 16.4 37 20.4 L39.7 24.7 V4.4 Z"/><text x="6.3" y="20" font-family="Liberation Sans, sans-serif" font-weight="bold" font-size="17.6" fill="#5b5b5b" stroke="#5b5b5b" stroke-width="0.7" textLength="17" lengthAdjust="spacingAndGlyphs">AI</text></svg>
<div class="a" style="left:992.4px;top:462.6px;font-size:14.5px;line-height:18px;font-weight:bold;color:#5e5e5e;-webkit-text-stroke:0.55px #5e5e5e;font-family:'Liberation Sans','Noto Sans CJK SC',sans-serif">树叶云</div>
</div>
</body>
</html>
